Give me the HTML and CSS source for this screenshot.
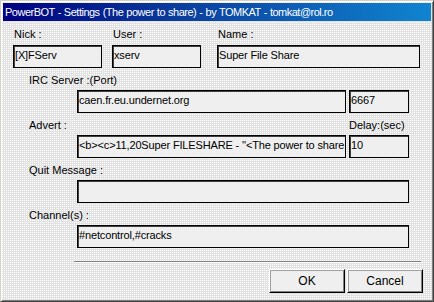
FILE: index.html
```html
<!DOCTYPE html>
<html lang="en">
<head>
    <meta charset="UTF-8">
    <title>PowerBOT - Settings</title>
    <link rel="stylesheet" href="styles.css">
</head>
<body>
    <div class="window">
        <div class="titlebar">PowerBOT - Settings (The power to share) - by TOMKAT - tomkat@rol.ro</div>
        <div class="content">
            <div class="ident">
                <div class="field nick">
                    <label>Nick :</label>
                    <div class="edit">[X]FServ</div>
                </div>
                <div class="field user">
                    <label>User :</label>
                    <div class="edit">xserv</div>
                </div>
                <div class="field name">
                    <label>Name :</label>
                    <div class="edit">Super File Share</div>
                </div>
            </div>

            <div class="section">
                <label class="caption">IRC Server :(Port)</label>
                <div class="pair">
                    <div class="edit">caen.fr.eu.undernet.org</div>
                    <div class="edit">6667</div>
                </div>
            </div>

            <div class="section">
                <div class="caption-row">
                    <label class="caption">Advert :</label>
                    <label class="caption side">Delay:(sec)</label>
                </div>
                <div class="pair">
                    <div class="edit">&lt;b&gt;&lt;c&gt;11,20Super FILESHARE - ''&lt;The power to share</div>
                    <div class="edit">10</div>
                </div>
            </div>

            <div class="section">
                <label class="caption">Quit Message :</label>
                <div class="edit wide"></div>
            </div>

            <div class="section">
                <label class="caption">Channel(s) :</label>
                <div class="edit wide">#netcontrol,#cracks</div>
            </div>

            <div class="separator"></div>

            <div class="buttons">
                <button>OK</button>
                <button>Cancel</button>
            </div>
        </div>
    </div>
</body>
</html>
```

FILE: styles.css
```css
html, body {
    margin: 0;
    padding: 0;
}
body {
    font-family: 'Liberation Sans', Arial, sans-serif;
    font-size: 11px;
    color: #000;
    width: 434px;
    height: 302px;
    overflow: hidden;
}
.window {
    box-sizing: border-box;
    width: 434px;
    height: 302px;
    padding: 3px;
    background-color: #fff;
    background-image:
        linear-gradient(90deg, #e2e2e2 1px, transparent 1px),
        linear-gradient(#e2e2e2 1px, transparent 1px);
    background-size: 2px 2px;
    border-top: 1px solid #d4d0c8;
    border-left: 1px solid #d4d0c8;
    border-right: 1px solid #404040;
    border-bottom: 1px solid #404040;
    box-shadow: inset 1px 1px #fff, inset -1px -1px #808080;
    display: flex;
    flex-direction: column;
}
.titlebar {
    height: 18px;
    margin: -1px -1px 0 -1px;
    padding-left: 2px;
    line-height: 18px;
    color: #fff;
    font-size: 11px;
    letter-spacing: -0.5px;
    word-spacing: 0.5px;
    white-space: nowrap;
    background: linear-gradient(90deg, #000080 0%, #0a3c9c 40%, #1084d0 100%);
}
.content {
    flex: 1;
}
label {
    display: block;
    height: 14px;
    line-height: 14px;
}
.edit {
    box-sizing: border-box;
    height: 23px;
    padding: 2px 1px;
    line-height: 15px;
    letter-spacing: -0.15px;
    background: #efefef;
    border: 1px solid #000;
    box-shadow: inset 1px 1px #404040;
    white-space: nowrap;
    overflow: hidden;
}
.ident {
    display: flex;
    margin-top: 6px;
    padding-left: 9px;
}
.field label {
    margin-left: 1px;
    margin-bottom: 4px;
}
.nick {
    width: 89px;
}
.user {
    width: 89px;
    margin-left: 10px;
}
.name {
    width: 203px;
    margin-left: 16px;
}
.section {
    margin-top: 5px;
    padding-left: 25px;
}
.caption-row {
    display: flex;
}
.caption-row .caption:first-child {
    width: 320px;
}
.caption {
    margin-bottom: 3px;
}
.pair {
    display: flex;
    gap: 3px;
    margin-left: 48px;
}
.pair .edit:first-child {
    width: 269px;
}
.pair .edit:last-child {
    width: 60px;
}
.edit.wide {
    margin-left: 48px;
    width: 332px;
}
.separator {
    margin: 13px 9px 0 70px;
    height: 1px;
    background: #808080;
    border-bottom: 1px solid #fff;
}
.buttons {
    display: flex;
    justify-content: flex-end;
    gap: 2px;
    margin-top: 6px;
    padding-right: 7px;
}
button {
    box-sizing: border-box;
    width: 76px;
    height: 24px;
    font-family: 'Liberation Sans', Arial, sans-serif;
    font-size: 12px;
    color: #000;
    background: #efefef;
    border: 1px solid;
    border-color: #fff #000 #000 #fff;
    box-shadow: inset 1px 1px #a0a0a0, inset -1px -1px #808080;
    padding: 0;
}
```
